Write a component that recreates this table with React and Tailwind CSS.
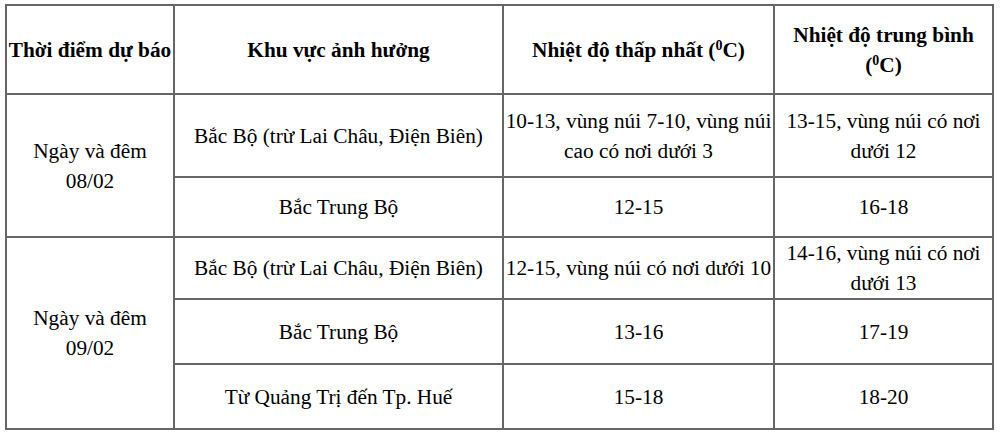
import React from 'react';

const rows = [
  { date: ['Ngày và đêm', '08/02'], span: 2, area: 'Bắc Bộ (trừ Lai Châu, Điện Biên)', min: ['10-13, vùng núi 7-10, vùng núi', 'cao có nơi dưới 3'], avg: ['13-15, vùng núi có nơi', 'dưới 12'], h: 'h-[83px]' },
  { area: 'Bắc Trung Bộ', min: ['12-15'], avg: ['16-18'], h: 'h-[60px]' },
  { date: ['Ngày và đêm', '09/02'], span: 3, area: 'Bắc Bộ (trừ Lai Châu, Điện Biên)', min: ['12-15, vùng núi có nơi dưới 10'], avg: ['14-16, vùng núi có nơi', 'dưới 13'], h: 'h-[61px]' },
  { area: 'Bắc Trung Bộ', min: ['13-16'], avg: ['17-19'], h: 'h-[65px]' },
  { area: 'Từ Quảng Trị đến Tp. Huế', min: ['15-18'], avg: ['18-20'], h: 'h-[65px]' },
];

const cell = 'border-2 border-[#666] text-center align-middle p-0';

const Lines = ({ items }) => items.map((t, i) => <div key={i} className="whitespace-nowrap">{t}</div>);

export default function App() {
  return (
    <div className="w-[1000px] h-[436px] bg-white pt-[4px] pl-[5px] [font-family:'Liberation_Serif',serif] text-[21.3px] leading-[30px] text-black">
      <table className="border-collapse table-fixed w-[989px]">
        <colgroup>
          <col className="w-[168px]" />
          <col className="w-[329px]" />
          <col className="w-[271px]" />
          <col className="w-[219px]" />
        </colgroup>
        <thead>
          <tr className="h-[89px] font-bold">
            <th className={cell}>Thời điểm dự báo</th>
            <th className={cell}>Khu vực ảnh hưởng</th>
            <th className={cell}>
              Nhiệt độ thấp nhất (<sup className="text-[14px]">0</sup>C)
            </th>
            <th className={cell}>
              <div>Nhiệt độ trung bình</div>
              <div>(<sup className="text-[14px]">0</sup>C)</div>
            </th>
          </tr>
        </thead>
        <tbody>
          {rows.map((r, i) => (
            <tr key={i} className={r.h}>
              {r.date && (
                <td rowSpan={r.span} className={cell}>
                  <Lines items={r.date} />
                </td>
              )}
              <td className={cell}>{r.area}</td>
              <td className={cell}>
                <Lines items={r.min} />
              </td>
              <td className={cell}>
                <Lines items={r.avg} />
              </td>
            </tr>
          ))}
        </tbody>
      </table>
    </div>
  );
}
